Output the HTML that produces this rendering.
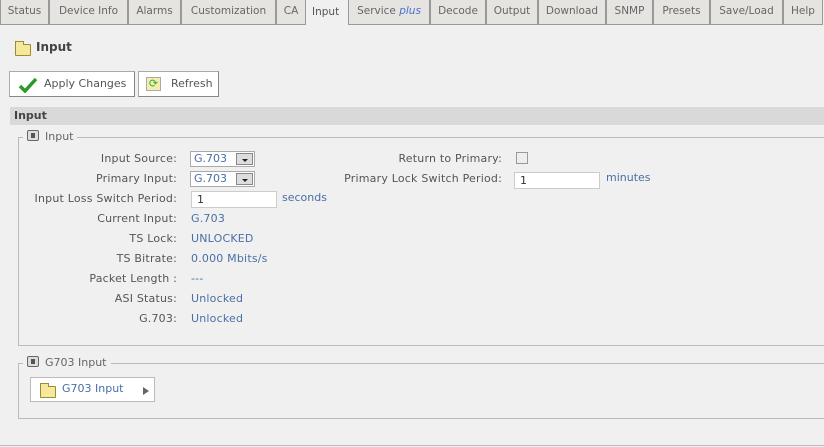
<!DOCTYPE html>
<html><head><style>
*{box-sizing:border-box}
body{margin:0;width:824px;height:447px;background:#f0f0f0;font-family:"DejaVu Sans","Liberation Sans",sans-serif;font-size:11px;color:#555;position:relative;overflow:hidden}
.a{position:absolute;white-space:nowrap}
.tab{position:absolute;top:0;height:25px;background:#e6e4e0;border:1px solid #999;border-top:none;line-height:23px;text-align:center;color:#666;font-size:10.5px}
.lbl{position:absolute;right:647px;white-space:nowrap;color:#555;letter-spacing:0.2px}
.val{position:absolute;left:191px;color:#4a6fa5;letter-spacing:0.2px}
.btn{position:absolute;background:#fff;border:1px solid #aaa;border-right-color:#888;border-bottom-color:#888}
.sel{position:absolute;left:190px;width:65px;height:16px;background:#fff;border:1px solid #aaa;color:#4a6fa5;padding-left:3px;line-height:14px}
.sel i{position:absolute;right:1px;top:1px;width:17px;height:12px;background:#ddd;border:1px solid #888}
.sel i:after{content:"";position:absolute;left:5px;top:5px;border:3px solid transparent;border-top:3px solid #222}
.inp{position:absolute;height:17px;background:#fff;border:1px solid #ccc;color:#333;padding-left:5px;line-height:15px}
fieldset{position:absolute;margin:0;padding:0;border:1px solid #bbb;border-right:none}
.leg{position:absolute;background:#f0f0f0;padding:0 4px;color:#666}
.ico{display:inline-block;width:12px;height:11px;border:1px solid #666;border-radius:2px;background:#ddd;vertical-align:-1px;margin-right:6px;position:relative}
.ico:after{content:"";position:absolute;left:3px;top:2px;width:4px;height:5px;background:#555}
.fold{position:absolute;width:16px;height:12px;background:#f5e89a;border:1px solid #a08a30;border-radius:1px}
.fold:before{content:"";position:absolute;left:-1px;top:-4px;width:7px;height:3px;background:#f5e89a;border:1px solid #a08a30;border-bottom:none}
</style></head><body>
<div class="tab" style="left:0;width:49px">Status</div>
<div class="tab" style="left:49px;width:79px">Device Info</div>
<div class="tab" style="left:128px;width:53px">Alarms</div>
<div class="tab" style="left:181px;width:95px">Customization</div>
<div class="tab" style="left:276px;width:30px">CA</div>
<div class="a" style="left:312px;top:6px;color:#555;font-size:10.5px">Input</div>
<div class="tab" style="left:348px;width:82px">Service <i style="color:#4a6fd0">plus</i></div>
<div class="tab" style="left:430px;width:56px">Decode</div>
<div class="tab" style="left:486px;width:52px">Output</div>
<div class="tab" style="left:538px;width:68px">Download</div>
<div class="tab" style="left:606px;width:47px">SNMP</div>
<div class="tab" style="left:653px;width:57px">Presets</div>
<div class="tab" style="left:710px;width:73px">Save/Load</div>
<div class="tab" style="left:783px;width:40px">Help</div>

<div class="fold" style="left:15px;top:44px"></div>
<div class="a" style="left:36px;top:40px;font-weight:bold;font-size:12px;color:#444">Input</div>

<div class="btn" style="left:9px;top:71px;width:126px;height:26px">
<svg class="a" style="left:8px;top:5px" width="20" height="16"><path d="M2 9 L7 14 L18 2" stroke="#2a9a2a" stroke-width="3.5" fill="none"/></svg>
<span class="a" style="left:34px;top:5px;color:#555">Apply Changes</span></div>
<div class="btn" style="left:138px;top:71px;width:81px;height:26px">
<div class="a" style="left:7px;top:5px;width:15px;height:14px;background:#f5edb0;border:1px solid #aaa;color:#3a3;font-size:11px;line-height:12px;text-align:center">⟳</div>
<span class="a" style="left:32px;top:5px;color:#555">Refresh</span></div>

<div class="a" style="left:10px;top:107px;width:814px;height:18px;background:#d9d9d9"></div>
<div class="a" style="left:14px;top:109px;font-weight:bold;color:#444">Input</div>

<fieldset style="left:18px;top:137px;width:806px;height:209px"></fieldset>
<div class="leg" style="left:23px;top:130px"><span class="ico"></span>Input</div>

<div class="lbl" style="top:152px">Input Source:</div><div class="sel" style="top:151px">G.703<i></i></div>
<div class="lbl" style="top:172px">Primary Input:</div><div class="sel" style="top:171px">G.703<i></i></div>
<div class="lbl" style="top:192px">Input Loss Switch Period:</div><div class="inp" style="left:191px;top:191px;width:86px">1</div>
<div class="a" style="left:282px;top:191px;color:#4a6fa5">seconds</div>
<div class="lbl" style="top:212px">Current Input:</div><div class="val" style="top:212px">G.703</div>
<div class="lbl" style="top:232px">TS Lock:</div><div class="val" style="top:232px">UNLOCKED</div>
<div class="lbl" style="top:252px">TS Bitrate:</div><div class="val" style="top:252px">0.000 Mbits/s</div>
<div class="lbl" style="top:272px">Packet Length :</div><div class="val" style="top:272px">---</div>
<div class="lbl" style="top:292px">ASI Status:</div><div class="val" style="top:292px">Unlocked</div>
<div class="lbl" style="top:312px">G.703:</div><div class="val" style="top:312px">Unlocked</div>

<div class="a" style="right:322px;top:152px;letter-spacing:0.2px">Return to Primary:</div>
<div class="a" style="left:516px;top:152px;width:12px;height:12px;border:1px solid #999;background:#eee"></div>
<div class="a" style="right:322px;top:172px;letter-spacing:0.2px">Primary Lock Switch Period:</div>
<div class="inp" style="left:514px;top:172px;width:86px">1</div>
<div class="a" style="left:606px;top:171px;color:#4a6fa5">minutes</div>

<fieldset style="left:18px;top:363px;width:806px;height:56px"></fieldset>
<div class="leg" style="left:23px;top:356px"><span class="ico"></span>G703 Input</div>
<div class="btn" style="left:30px;top:377px;width:125px;height:25px;border-color:#bbb">
<div class="fold" style="left:9px;top:8px"></div>
<span class="a" style="left:31px;top:4px;color:#4a6fa5">G703 Input</span>
<div class="a" style="left:112px;top:9px;border:4px solid transparent;border-left:6px solid #666"></div></div>

<div class="a" style="left:0;top:445px;width:824px;height:1px;background:#bbb"></div>
</body></html>
